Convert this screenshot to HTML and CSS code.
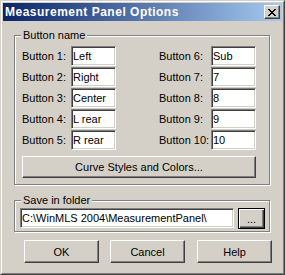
FILE: index.html
```html
<!DOCTYPE html>
<html lang="en">
<head>
  <meta charset="UTF-8" />
  <title>Measurement Panel Options</title>
  <link rel="stylesheet" href="styles.css">
</head>
<body>
  <div class="window">
    <div class="frame">
      <div class="titlebar">
        <span class="title">Measurement Panel Options</span>
        <button class="close" title="Close">
          <svg width="8" height="7" viewBox="0 0 8 7" shape-rendering="crispEdges"><path fill="#000" d="M0 0h2v1H0z M6 0h2v1H6z M1 1h2v1H1z M5 1h2v1H5z M2 2h4v1H2z M3 3h2v1H3z M2 4h4v1H2z M1 5h2v1H1z M5 5h2v1H5z M0 6h2v1H0z M6 6h2v1H6z"/></svg>
        </button>
      </div>

      <div class="content">
        <div class="group names">
          <div class="legend">Button name</div>
          <div class="fields">
            <div class="col">
              <label class="field"><span class="lbl">Button 1:</span><input class="edit" value="Left"></label>
              <label class="field"><span class="lbl">Button 2:</span><input class="edit" value="Right"></label>
              <label class="field"><span class="lbl">Button 3:</span><input class="edit" value="Center"></label>
              <label class="field"><span class="lbl">Button 4:</span><input class="edit" value="L rear"></label>
              <label class="field"><span class="lbl">Button 5:</span><input class="edit" value="R rear"></label>
            </div>
            <div class="col right">
              <label class="field"><span class="lbl">Button 6:</span><input class="edit" value="Sub"></label>
              <label class="field"><span class="lbl">Button 7:</span><input class="edit" value="7"></label>
              <label class="field"><span class="lbl">Button 8:</span><input class="edit" value="8"></label>
              <label class="field"><span class="lbl">Button 9:</span><input class="edit" value="9"></label>
              <label class="field"><span class="lbl">Button 10:</span><input class="edit" value="10"></label>
            </div>
          </div>
          <button class="btn wide">Curve Styles and Colors...</button>
        </div>

        <div class="group folder">
          <div class="legend">Save in folder</div>
          <div class="path-row">
            <input class="edit path" value="C:\WinMLS 2004\MeasurementPanel\">
            <button class="btn browse">...</button>
          </div>
        </div>

        <div class="actions">
          <button class="btn">OK</button>
          <button class="btn">Cancel</button>
          <button class="btn help">Help</button>
        </div>
      </div>
    </div>
  </div>
</body>
</html>
```

FILE: styles.css
```css
* {
  box-sizing: border-box;
}
body {
  margin: 0;
  font-family: "Liberation Sans", Arial, sans-serif;
  font-size: 11px;
  color: #000;
  background: #d4d0c8;
}
.window {
  width: 285px;
  height: 275px;
  border: 1px solid;
  border-color: #d4d0c8 #404040 #404040 #d4d0c8;
  background: #d4d0c8;
}
.frame {
  height: 100%;
  border: 1px solid;
  border-color: #fff #808080 #808080 #fff;
  padding: 1px;
}

/* caption */
.titlebar {
  height: 18px;
  display: flex;
  align-items: center;
  justify-content: space-between;
  padding: 0 2px;
  background: linear-gradient(to right, #0a246a, #a6caf0);
}
.title {
  color: #fff;
  font-weight: bold;
  font-size: 12px;
  letter-spacing: 0.5px;
}
.close {
  width: 16px;
  height: 14px;
  padding: 0;
  display: flex;
  align-items: center;
  justify-content: center;
  background: #d4d0c8;
  border: 1px solid;
  border-color: #fff #404040 #404040 #fff;
  box-shadow: inset -1px -1px #808080;
}

.content {
  padding: 14px 0 0 11px;
}

/* etched group boxes */
.group {
  width: 256px;
  border: 1px solid #808080;
  box-shadow: inset 1px 1px #fff, 1px 1px #fff;
}
.legend {
  width: fit-content;
  height: 13px;
  line-height: 13px;
  margin: -7px 0 0 6px;
  padding: 0 2px;
  background: #d4d0c8;
}
.fields {
  display: flex;
  gap: 43px;
  padding: 4px 0 0 7px;
}
.col {
  display: flex;
  flex-direction: column;
  gap: 1px;
}
.field {
  display: flex;
  align-items: center;
  height: 20px;
}
.lbl {
  width: 49px;
}
.right .lbl {
  width: 52px;
}

.edit {
  width: 45px;
  height: 20px;
  margin: 0;
  padding: 0 1px;
  font: inherit;
  color: #000;
  background: #fff;
  border: 1px solid;
  border-color: #808080 #fff #fff #808080;
  box-shadow: inset 1px 1px #404040, inset -1px -1px #d4d0c8;
  outline: none;
}

/* push buttons */
.btn {
  width: 75px;
  height: 23px;
  padding: 0;
  font: inherit;
  color: #000;
  background: #d4d0c8;
  border: 1px solid;
  border-color: #fff #404040 #404040 #fff;
  box-shadow: inset -1px -1px #808080;
}
.wide {
  display: block;
  width: 234px;
  height: 22px;
  margin: 6px 0 6px 7px;
}

.folder {
  margin-top: 15px;
}
.path-row {
  display: flex;
  gap: 4px;
  padding: 1px 0 2px 5px;
}
.path {
  width: 214px;
}
.browse {
  width: 27px;
  height: 21px;
  border: 1px solid #000;
  box-shadow: inset 1px 1px #fff, inset -1px -1px #404040, inset -2px -2px #808080;
}

.actions {
  display: flex;
  gap: 11px;
  margin: 8px 0 0 10px;
}
.help {
  margin-left: 1px;
}
```
